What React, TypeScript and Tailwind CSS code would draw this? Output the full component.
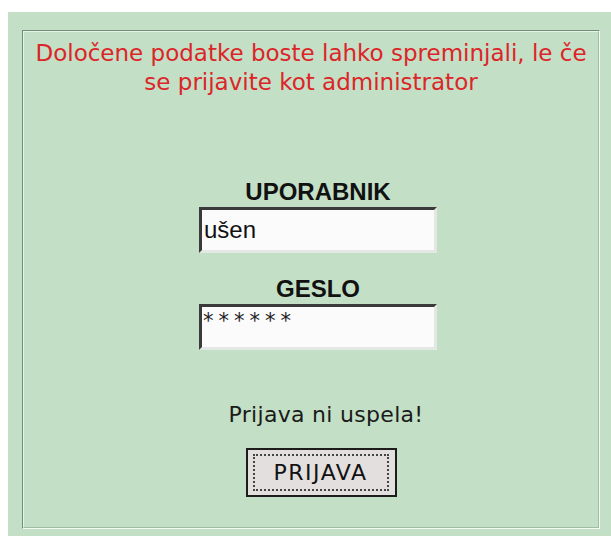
export default function App() {
  return (
    <div className="h-[536px] w-[611px] bg-white pl-[8px] pt-[12px] overflow-hidden">
      <div className="h-[524px] w-[603px] bg-[#c3dfc5] pl-[14px] pr-[11px] pt-[18px] pb-[7px]">
        {/* grooved frame: dark/light outer edge, light/dark inner edge */}
        <div className="h-full border border-t-[#6f8e75] border-l-[#6f8e75] border-b-[#f2fbf2] border-r-[#f2fbf2]">
          <div className="h-full border border-t-[#e6f3e7] border-l-[#e6f3e7] border-b-[#9fbda4] border-r-[#9fbda4] flex flex-col items-center font-['DejaVu_Sans',sans-serif]">
            <p className="mt-[7px] text-center text-[23px] leading-[29px] text-[#dc2528]">
              Določene podatke boste lahko spreminjali, le če
              <br />
              se prijavite kot administrator
            </p>

            <div className="ml-[14px] flex flex-col items-center">
              <div className="mt-[83px] font-['Liberation_Sans',sans-serif] text-[24px] leading-[24px] font-bold text-[#111]">
                UPORABNIK
              </div>
              <div className="mt-[3px] h-[46px] w-[238px] bg-[#fbfbfb] border-[3px] border-t-[#3a3a3a] border-l-[#3a3a3a] border-b-[#e4e8e4] border-r-[#e4e8e4] px-[2px] pt-[6px] font-['Liberation_Sans',sans-serif] text-[24px] leading-[28px] text-[#111]">
                ušen
              </div>

              <div className="mt-[24px] font-['Liberation_Sans',sans-serif] text-[24px] leading-[24px] font-bold text-[#111]">
                GESLO
              </div>
              <div className="mt-[3px] h-[46px] w-[238px] bg-[#fbfbfb] border-[3px] border-t-[#3a3a3a] border-l-[#3a3a3a] border-b-[#e4e8e4] border-r-[#e4e8e4] px-[1px] pt-[4px] text-[21px] leading-[20px] tracking-[5px] text-[#222]">
                ******
              </div>

              <p className="mt-[52px] ml-[16px] text-[22px] leading-[26px] tracking-[0.3px] text-[#1a1a1a]">
                Prijava ni uspela!
              </p>

              <button
                type="button"
                className="mt-[20px] ml-[6px] h-[49px] w-[151px] bg-[#e4dfdf] border-2 border-[#1c1c1c] pl-[5px] pr-[6px] py-[4px] font-['DejaVu_Sans',sans-serif]"
              >
                <span className="flex h-full w-full items-center justify-center border-2 border-dotted border-[#444] text-[22px] leading-[24px] tracking-[1.5px] text-[#111]">
                  PRIJAVA
                </span>
              </button>
            </div>
          </div>
        </div>
      </div>
    </div>
  );
}
